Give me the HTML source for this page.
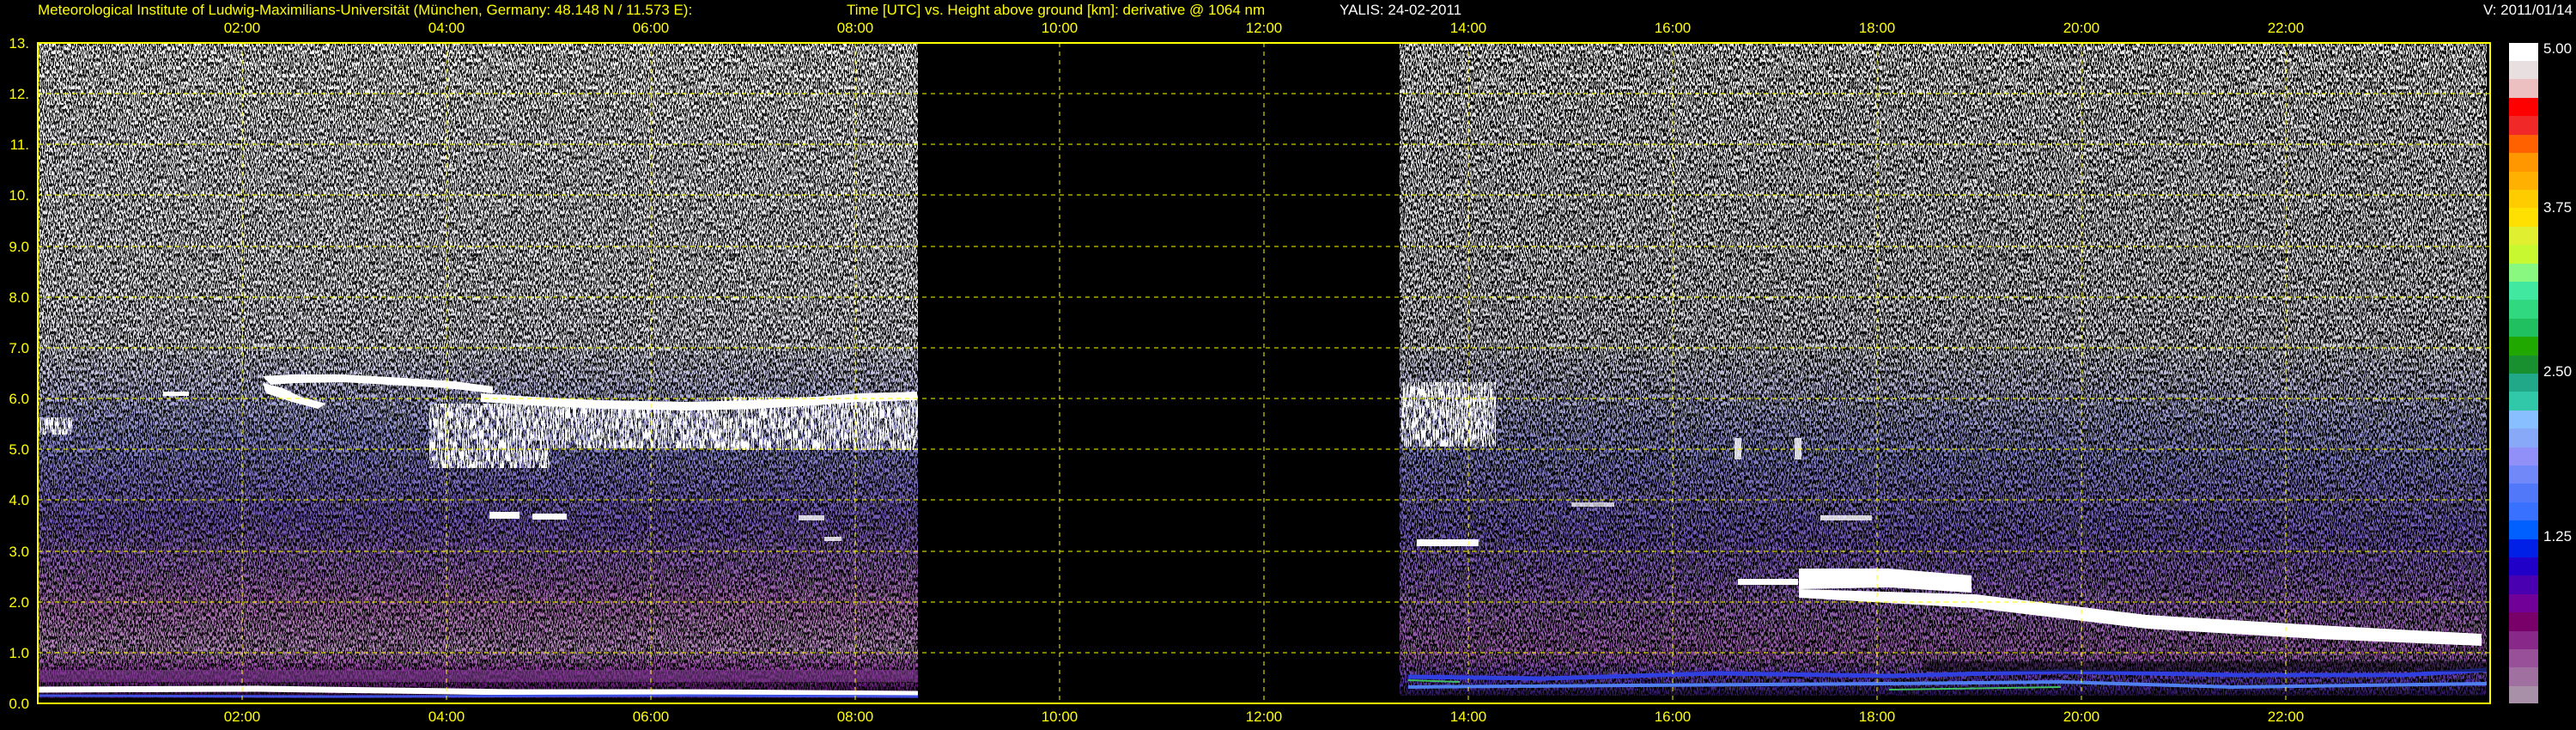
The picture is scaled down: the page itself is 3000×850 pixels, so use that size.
<!DOCTYPE html>
<html><head><meta charset="utf-8"><style>
html,body{margin:0;padding:0;background:#000;}
svg{display:block;}
text{font-family:"Liberation Sans",sans-serif;font-size:17px;}
</style></head><body>
<svg width="3000" height="850" viewBox="0 0 3000 850" xmlns="http://www.w3.org/2000/svg">
<defs>
<filter id="nz" x="0" y="0" width="1" height="1">
<feTurbulence type="fractalNoise" baseFrequency="0.85 0.22" numOctaves="1" seed="7"/>
<feColorMatrix type="matrix" values="0 0 0 0 0  0 0 0 0 0  0 0 0 0 0  1 0 0 0 0"/>
<feComponentTransfer><feFuncA type="discrete" tableValues="0 0 1 1"/></feComponentTransfer>
</filter>
<filter id="wz" x="0" y="0" width="1" height="1">
<feTurbulence type="fractalNoise" baseFrequency="0.7 0.08" numOctaves="1" seed="3"/>
<feColorMatrix type="matrix" values="0 0 0 0 1  0 0 0 0 1  0 0 0 0 1  1 0 0 0 0"/>
<feComponentTransfer><feFuncA type="discrete" tableValues="0 0 1 1"/></feComponentTransfer>
</filter>
<linearGradient id="gl" x1="0" y1="50" x2="0" y2="819" gradientUnits="userSpaceOnUse">
<stop offset="0" stop-color="#f4f4f4"/>
<stop offset="0.45" stop-color="#e0e0e8"/>
<stop offset="0.6" stop-color="#8888c8"/>
<stop offset="0.72" stop-color="#7058b0"/>
<stop offset="0.85" stop-color="#a068a8"/>
<stop offset="0.92" stop-color="#b088b8"/>
<stop offset="0.95" stop-color="#8a3a9a"/>
<stop offset="1" stop-color="#300040"/>
</linearGradient>
<linearGradient id="gr" x1="0" y1="50" x2="0" y2="819" gradientUnits="userSpaceOnUse">
<stop offset="0" stop-color="#ececec"/>
<stop offset="0.45" stop-color="#d4d4dc"/>
<stop offset="0.62" stop-color="#8080c0"/>
<stop offset="0.75" stop-color="#7058b0"/>
<stop offset="0.88" stop-color="#9060a8"/>
<stop offset="0.93" stop-color="#9058a0"/>
<stop offset="0.97" stop-color="#5030a0"/>
<stop offset="1" stop-color="#100018"/>
</linearGradient>
</defs>

<rect x="44" y="50" width="1025" height="769" fill="url(#gl)"/>
<rect x="44" y="50" width="1025" height="769" fill="#000" filter="url(#nz)" opacity="0.9"/>
<rect x="1630" y="50" width="1266" height="769" fill="url(#gr)"/>
<rect x="1630" y="50" width="1266" height="769" fill="#000" filter="url(#nz)" opacity="0.95"/>

<!-- left bottom layers -->
<rect x="44" y="780" width="1025" height="14" fill="#7a3a8a" opacity="0.6"/>
<path d="M44 803 L300 802 L600 806 L800 806 L1069 808" stroke="#fff" stroke-width="7" fill="none"/>
<path d="M44 810 L400 811 L800 810 L1069 811" stroke="#4050e0" stroke-width="3" fill="none"/>
<rect x="44" y="813" width="1025" height="6" fill="#000"/>

<!-- right bottom layers -->
<path d="M1640 788 L1800 790 L2000 784 L2200 787 L2400 782 L2600 786 L2800 786 L2896 780" stroke="#3040e0" stroke-width="5" fill="none"/>
<path d="M1640 800 L1900 798 L2200 796 L2400 794 L2600 800 L2896 796" stroke="#5080f0" stroke-width="4" fill="none"/>
<path d="M1640 792 L1700 794 M2200 803 L2400 800" stroke="#40c060" stroke-width="2" fill="none"/>
<rect x="1630" y="810" width="1266" height="9" fill="#000"/>
<rect x="2240" y="770" width="656" height="12" fill="#000" opacity="0.5"/>

<!-- shaggy clouds (white noise) -->
<rect x="500" y="470" width="140" height="75" fill="#000" filter="url(#wz)"/>
<rect x="640" y="472" width="200" height="50" fill="#000" filter="url(#wz)"/>
<rect x="840" y="462" width="229" height="62" fill="#000" filter="url(#wz)"/>
<rect x="44" y="486" width="40" height="20" fill="#000" filter="url(#wz)"/>
<rect x="1632" y="445" width="110" height="75" fill="#000" filter="url(#wz)"/>

<!-- clouds left -->
<g fill="#fff" stroke="none">
<path d="M306 438 L340 436 L400 436 L470 440 L530 444 L574 450 L574 458 L520 452 L470 449 L400 445 L345 446 L315 448 Z"/>
<path d="M306 446 L330 452 L350 462 L380 470 L370 476 L340 468 L310 458 Z"/>
<path d="M560 458 L620 462 L700 466 L800 468 L880 466 L950 462 L1000 458 L1068 456 L1068 466 L1000 468 L950 472 L880 476 L800 478 L700 476 L620 472 L560 468 Z"/>
<rect x="190" y="456" width="30" height="5"/>
<rect x="570" y="596" width="35" height="8"/>
<rect x="620" y="598" width="40" height="7"/>
<rect x="930" y="600" width="30" height="6" opacity="0.8"/>
<rect x="960" y="625" width="20" height="5" opacity="0.8"/>
</g>

<!-- clouds right -->
<g fill="#fff" stroke="none">
<rect x="1650" y="628" width="72" height="8"/>
<rect x="2024" y="674" width="70" height="7"/>
<path d="M2095 662 L2200 662 L2296 670 L2296 690 L2200 684 L2095 686 Z"/>
<path d="M2095 686 L2300 692 L2500 716 L2700 728 L2890 738 L2890 752 L2700 744 L2500 732 L2300 708 L2095 696 Z"/>
<rect x="1830" y="585" width="50" height="5" opacity="0.7"/>
<rect x="2120" y="600" width="60" height="6" opacity="0.8"/>
<rect x="2020" y="510" width="8" height="25" opacity="0.8"/>
<rect x="2090" y="510" width="8" height="25" opacity="0.8"/>
</g>

<!-- grid -->
<g stroke="#ffff00" stroke-width="1" stroke-dasharray="5 5" fill="none">
<path d="M44 760H2900M44 701H2900M44 642H2900M44 582H2900M44 523H2900M44 464H2900M44 405H2900M44 346H2900M44 287H2900M44 227H2900M44 168H2900M44 109H2900"/>
<path d="M282 50V819M520 50V819M758 50V819M996 50V819M1234 50V819M1472 50V819M1710 50V819M1948 50V819M2186 50V819M2424 50V819M2662 50V819"/>
</g>
<rect x="44" y="50" width="2856" height="769" fill="none" stroke="#ffff00" stroke-width="2"/>

<!-- colorbar -->
<g>
<rect x="2922" y="50" width="34" height="22" fill="#ffffff"/>
<rect x="2922" y="71" width="34" height="22" fill="#e8e0e0"/>
<rect x="2922" y="92" width="34" height="22" fill="#ecc0c0"/>
<rect x="2922" y="114" width="34" height="22" fill="#ff0000"/>
<rect x="2922" y="135" width="34" height="22" fill="#f02828"/>
<rect x="2922" y="157" width="34" height="22" fill="#ff6000"/>
<rect x="2922" y="178" width="34" height="22" fill="#ff9800"/>
<rect x="2922" y="200" width="34" height="22" fill="#ffb000"/>
<rect x="2922" y="221" width="34" height="22" fill="#ffcc00"/>
<rect x="2922" y="242" width="34" height="22" fill="#ffe000"/>
<rect x="2922" y="264" width="34" height="22" fill="#e0f030"/>
<rect x="2922" y="285" width="34" height="22" fill="#c8f830"/>
<rect x="2922" y="307" width="34" height="22" fill="#88f880"/>
<rect x="2922" y="328" width="34" height="22" fill="#40e8a0"/>
<rect x="2922" y="349" width="34" height="22" fill="#30d880"/>
<rect x="2922" y="371" width="34" height="22" fill="#20c060"/>
<rect x="2922" y="392" width="34" height="22" fill="#20a800"/>
<rect x="2922" y="414" width="34" height="22" fill="#189030"/>
<rect x="2922" y="435" width="34" height="22" fill="#20a888"/>
<rect x="2922" y="456" width="34" height="22" fill="#30c8a8"/>
<rect x="2922" y="478" width="34" height="22" fill="#88c0ff"/>
<rect x="2922" y="499" width="34" height="22" fill="#88a8f8"/>
<rect x="2922" y="521" width="34" height="22" fill="#9090f8"/>
<rect x="2922" y="542" width="34" height="22" fill="#7088f8"/>
<rect x="2922" y="563" width="34" height="22" fill="#5078f8"/>
<rect x="2922" y="585" width="34" height="22" fill="#3870ff"/>
<rect x="2922" y="606" width="34" height="22" fill="#0060ff"/>
<rect x="2922" y="628" width="34" height="22" fill="#0020e8"/>
<rect x="2922" y="649" width="34" height="22" fill="#2000c8"/>
<rect x="2922" y="670" width="34" height="22" fill="#4800b0"/>
<rect x="2922" y="692" width="34" height="22" fill="#700098"/>
<rect x="2922" y="713" width="34" height="22" fill="#780068"/>
<rect x="2922" y="735" width="34" height="22" fill="#882888"/>
<rect x="2922" y="756" width="34" height="22" fill="#985098"/>
<rect x="2922" y="777" width="34" height="22" fill="#a070a0"/>
<rect x="2922" y="799" width="34" height="20" fill="#a890a8"/>
</g>
<g fill="#fff">
<text x="2962" y="62">5.00</text>
<text x="2962" y="247">3.75</text>
<text x="2962" y="438">2.50</text>
<text x="2962" y="630">1.25</text>
<text x="2996" y="17" text-anchor="end">V: 2011/01/14</text>
<text x="1560" y="17">YALIS: 24-02-2011</text>
</g>

<g fill="#ffff00">
<text x="44" y="17">Meteorological Institute of Ludwig-Maximilians-Universität (München, Germany: 48.148 N / 11.573 E):</text>
<text x="986" y="17">Time [UTC] vs. Height above ground [km]: derivative @ 1064 nm</text>
</g>
<g fill="#ffff00" text-anchor="middle">
<text x="282" y="38">02:00</text><text x="520" y="38">04:00</text><text x="758" y="38">06:00</text><text x="996" y="38">08:00</text><text x="1234" y="38">10:00</text><text x="1472" y="38">12:00</text><text x="1710" y="38">14:00</text><text x="1948" y="38">16:00</text><text x="2186" y="38">18:00</text><text x="2424" y="38">20:00</text><text x="2662" y="38">22:00</text>
<text x="282" y="840">02:00</text><text x="520" y="840">04:00</text><text x="758" y="840">06:00</text><text x="996" y="840">08:00</text><text x="1234" y="840">10:00</text><text x="1472" y="840">12:00</text><text x="1710" y="840">14:00</text><text x="1948" y="840">16:00</text><text x="2186" y="840">18:00</text><text x="2424" y="840">20:00</text><text x="2662" y="840">22:00</text>
</g>
<g fill="#ffff00" text-anchor="end">
<text x="34" y="56">13.</text><text x="34" y="115">12.</text><text x="34" y="174">11.</text><text x="34" y="233">10.</text><text x="34" y="293">9.0</text><text x="34" y="352">8.0</text><text x="34" y="411">7.0</text><text x="34" y="470">6.0</text><text x="34" y="529">5.0</text><text x="34" y="588">4.0</text><text x="34" y="648">3.0</text><text x="34" y="707">2.0</text><text x="34" y="766">1.0</text><text x="34" y="825">0.0</text>
</g>
</svg>
</body></html>
